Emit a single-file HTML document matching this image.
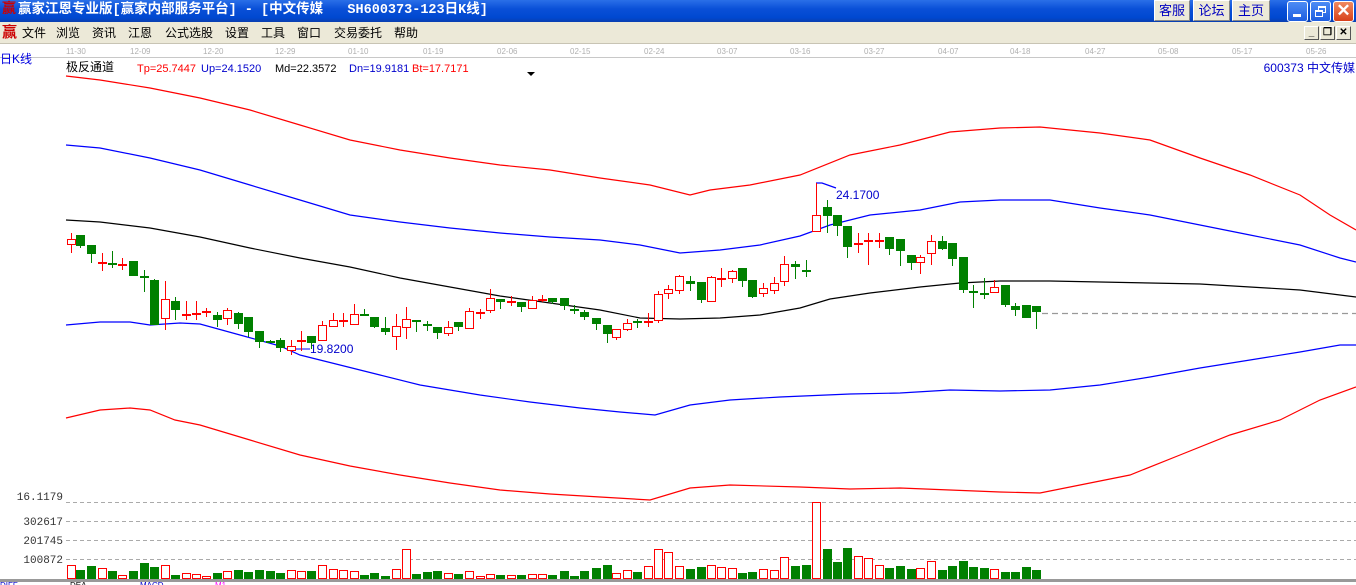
<!DOCTYPE html>
<html><head><meta charset="utf-8"><style>
*{margin:0;padding:0;box-sizing:border-box}
body{width:1356px;height:585px;overflow:hidden;background:#fff;font-family:"Liberation Sans","Noto Sans CJK SC",sans-serif;position:relative}
#title{position:absolute;left:0;top:0;width:1356px;height:22px;background:linear-gradient(#2a6fe8,#0a50d8 40%,#0048d0 80%,#0a3fb0);color:#fff;font-weight:bold;font-size:13.5px;line-height:21px;padding-left:18px;font-family:"Liberation Mono","Noto Sans CJK SC",monospace;}
.ico{position:absolute;color:#c00;font-size:14px;font-weight:bold}
.tb{position:absolute;top:0;height:21px;background:#ece9d8;border:1px solid #fff;border-right-color:#888;border-bottom-color:#888;color:#0000c0;font-size:13px;line-height:19px;text-align:center}
.wb{position:absolute;top:1px;width:21px;height:21px;border:1px solid #fff;border-radius:3px;background:linear-gradient(#4d8cf5,#1e5ee0)}
#menu{position:absolute;left:0;top:22px;width:1356px;height:22px;background:#ece9d8;font-size:12px;line-height:22px;border-bottom:1px solid #c8c4b4}
#menu span{position:absolute;top:0}
.mb{position:absolute;top:26px;width:15px;height:14px;border:1px solid #fff;border-right-color:#555;border-bottom-color:#555;background:#ece9d8;font-size:10px;line-height:12px;text-align:center;font-weight:bold}
</style></head><body>
<div id="title"><span class="ico" style="left:2px;top:0">赢</span>赢家江恩专业版[赢家内部服务平台] - [中文传媒&nbsp;&nbsp;&nbsp;SH600373-123日K线]</div>
<div class="tb" style="left:1154px;width:36px">客服</div>
<div class="tb" style="left:1193px;width:37px">论坛</div>
<div class="tb" style="left:1232px;width:38px">主页</div>
<div class="wb" style="left:1287px"><div style="position:absolute;left:5px;top:12px;width:8px;height:3px;background:#fff"></div></div>
<div class="wb" style="left:1310px"><div style="position:absolute;left:7px;top:4px;width:8px;height:7px;border:2px solid #fff;border-width:2px 1px 1px 1px"></div><div style="position:absolute;left:4px;top:8px;width:8px;height:7px;border:2px solid #fff;border-width:2px 1px 1px 1px;background:#2a6ae8"></div></div>
<div class="wb" style="left:1333px;background:linear-gradient(#f08a60,#d8401a);color:#fff;font-size:17px;line-height:18px;text-align:center;font-weight:bold">✕</div>
<div id="menu"><span style="left:2px;color:#c00;font-size:15px;font-weight:bold">赢</span><span style="left:22px">文件</span><span style="left:56px">浏览</span><span style="left:92px">资讯</span><span style="left:128px">江恩</span><span style="left:165px">公式选股</span><span style="left:225px">设置</span><span style="left:261px">工具</span><span style="left:297px">窗口</span><span style="left:334px">交易委托</span><span style="left:394px">帮助</span></div>
<div class="mb" style="left:1304px">_</div><div class="mb" style="left:1320px">❐</div><div class="mb" style="left:1336px">✕</div>
<svg width="1356" height="585" style="position:absolute;left:0;top:0" font-family="Liberation Sans, Noto Sans CJK SC, sans-serif">
<line x1="0" y1="57.5" x2="1356" y2="57.5" stroke="#c8c8c8"/>
<g fill="#b0b0b0" font-size="8"><text x="66" y="54">11-30</text><text x="130" y="54">12-09</text><text x="203" y="54">12-20</text><text x="275" y="54">12-29</text><text x="348" y="54">01-10</text><text x="423" y="54">01-19</text><text x="497" y="54">02-06</text><text x="570" y="54">02-15</text><text x="644" y="54">02-24</text><text x="717" y="54">03-07</text><text x="790" y="54">03-16</text><text x="864" y="54">03-27</text><text x="938" y="54">04-07</text><text x="1010" y="54">04-18</text><text x="1085" y="54">04-27</text><text x="1158" y="54">05-08</text><text x="1232" y="54">05-17</text><text x="1306" y="54">05-26</text></g>
<text x="0" y="63" fill="#0000e0" font-size="12">日K线</text>
<text x="66" y="71" fill="#000" font-size="12">极反通道</text>
<g font-size="11"><text x="137" y="72" fill="#f00">Tp=25.7447</text><text x="201" y="72" fill="#00c">Up=24.1520</text><text x="275" y="72" fill="#000">Md=22.3572</text><text x="349" y="72" fill="#00c">Dn=19.9181</text><text x="412" y="72" fill="#f00">Bt=17.7171</text></g>
<polygon points="527,72 535,72 531,76" fill="#000"/>
<text x="1355" y="72" fill="#00c" font-size="12" text-anchor="end">600373  中文传媒</text>
<g fill="none" stroke-width="1.2">
<polyline stroke="#f00" points="66,76 100,80 150,88 200,98 250,110 300,125 350,140 400,150 450,158 500,165 550,170 600,178 650,185 690,195 710,190 750,185 800,175 850,155 900,145 950,132 1000,128 1040,127 1100,133 1150,140 1200,158 1250,175 1300,195 1330,215 1356,230"/>
<polyline stroke="#00f" points="66,145 100,148 150,158 200,170 250,185 300,200 350,215 400,222 450,228 500,233 550,237 600,240 640,245 680,253 720,250 760,245 800,236 830,225 870,215 920,210 960,202 1000,200 1050,200 1100,208 1150,215 1200,225 1250,235 1300,245 1340,258 1356,262"/>
<polyline stroke="#000" points="66,220 100,222 150,228 200,237 250,248 300,258 350,267 400,278 450,287 500,296 550,303 600,310 640,318 680,319 720,318 760,315 800,308 830,299 870,293 920,287 960,283 1000,281 1050,281 1100,282 1150,283 1200,284 1250,287 1300,290 1356,297"/>
<polyline stroke="#00f" points="66,325 100,322 130,322 150,325 180,323 200,324 240,335 280,346 300,355 340,365 380,375 420,385 480,395 530,402 580,408 620,412 655,415 690,405 730,400 780,397 850,394 900,393 950,390 1000,391 1050,390 1100,385 1150,377 1200,368 1250,360 1300,352 1340,345 1356,345"/>
<polyline stroke="#f00" points="66,418 100,410 130,408 150,410 175,420 200,425 250,440 300,455 350,466 400,475 450,483 500,490 550,494 600,497 650,500 690,488 730,485 800,487 850,489 900,488 950,490 1000,492 1040,493 1080,485 1130,475 1180,455 1230,435 1280,420 1320,400 1356,387"/>
<line x1="1042" y1="313.5" x2="1356" y2="313.5" stroke="#999" stroke-dasharray="6,4"/>
<polyline stroke="#00f" points="816,183 822,183 836,188"/>
</g>
<text x="836" y="199" fill="#00c" font-size="12">24.1700</text>
<text x="310" y="353" fill="#00c" font-size="12">19.8200</text>
<line x1="294" y1="349" x2="310" y2="349" stroke="#00f"/>
<g stroke="#aaa" stroke-dasharray="4,3"><line x1="66" y1="502.5" x2="1356" y2="502.5"/><line x1="66" y1="521.5" x2="1356" y2="521.5"/><line x1="66" y1="540.5" x2="1356" y2="540.5"/><line x1="66" y1="559.5" x2="1356" y2="559.5"/></g>
<g fill="#333" font-size="11" text-anchor="end" font-family="Liberation Mono, monospace"><text x="63" y="500">16.1179</text><text x="63" y="525">302617</text><text x="63" y="544">201745</text><text x="63" y="563">100872</text></g>
<rect x="0" y="579" width="1356" height="3" fill="#999"/>
<g id="c"></g>
<g font-size="8"><text x="0" y="588" fill="#00c">DIFF</text><text x="70" y="588" fill="#000">DEA</text><text x="140" y="588" fill="#00c">MACD</text><text x="215" y="588" fill="#f0f">M1</text></g>
</svg>
<script>
var d=[[71,'r',239,244,233,253,565],[80,'g',235,246,235,248,570],[91,'g',245,254,245,263,566],[102,'r',262,262,253,271,568],[112,'g',263,263,251,268,571],[122,'r',264,264,258,270,575],[133,'g',261,276,261,276,571],[144,'g',276,276,270,292,563],[154,'g',280,325,279,325,567],[165,'r',299,318,281,330,565],[175,'g',301,310,297,320,575],[186,'r',314,314,301,320,573],[196,'r',313,313,301,320,574],[206,'r',311,311,308,317,576],[217,'g',315,320,312,327,573],[227,'r',310,318,308,325,571],[238,'g',313,324,312,329,570],[248,'g',317,332,317,337,572],[259,'g',331,342,331,348,570],[270,'g',341,341,340,343,571],[280,'g',340,348,338,352,573],[291,'r',346,350,340,355,570],[301,'r',340,340,331,351,571],[311,'g',336,343,336,349,571],[322,'r',325,340,321,340,565],[333,'r',320,326,313,327,569],[343,'r',320,320,313,327,570],[354,'r',314,324,304,325,571],[364,'g',314,314,309,316,575],[374,'g',317,327,317,328,573],[385,'g',328,332,317,335,576],[396,'r',326,336,314,350,569],[406,'r',319,327,307,339,549],[416,'g',320,320,320,332,574],[427,'g',324,324,321,331,572],[437,'g',327,333,327,339,571],[448,'r',327,333,321,336,573],[458,'g',322,327,322,331,574],[469,'r',311,328,308,328,571],[480,'r',312,312,309,319,576],[490,'r',298,310,289,313,574],[500,'g',299,302,299,309,575],[511,'r',301,301,296,306,575],[521,'g',302,307,302,312,575],[532,'r',300,308,296,309,574],[542,'r',299,299,295,302,574],[552,'g',298,302,298,304,575],[564,'g',298,306,298,310,571],[574,'g',309,309,305,314,576],[584,'g',312,317,310,320,571],[596,'g',318,324,318,330,568],[607,'g',325,334,325,343,565],[616,'r',329,337,329,340,573],[627,'r',323,329,319,331,570],[637,'g',321,321,319,328,572],[648,'r',321,321,313,327,566],[658,'r',294,320,291,323,549],[668,'r',289,293,285,299,552],[679,'r',276,290,275,294,566],[690,'g',281,284,276,291,569],[701,'g',282,300,282,303,567],[711,'r',277,301,276,302,565],[721,'r',278,278,268,287,567],[732,'r',271,278,270,283,568],[742,'g',268,281,268,287,573],[752,'g',280,297,280,298,572],[763,'r',288,293,283,297,569],[774,'r',283,290,277,294,570],[784,'r',264,281,256,286,557],[795,'g',264,267,261,279,566],[806,'g',270,270,260,277,565],[816,'r',215,231,183,232,502],[827,'g',207,216,200,233,549],[837,'g',215,226,215,236,562],[847,'g',226,247,226,258,548],[858,'r',243,243,233,253,556],[868,'r',240,240,233,265,558],[879,'r',240,240,233,248,565],[889,'g',237,249,237,255,568],[900,'g',239,251,239,266,566],[911,'g',255,263,255,270,569],[920,'r',257,262,255,274,568],[931,'r',241,253,235,265,561],[942,'g',241,249,236,250,570],[952,'g',243,259,243,266,566],[963,'g',257,290,257,293,561],[973,'g',291,291,285,308,567],[984,'g',293,293,278,299,568],[994,'r',287,292,280,293,569],[1005,'g',285,305,285,307,572],[1015,'g',306,310,303,316,572],[1026,'g',305,318,305,318,567],[1036,'g',306,312,306,329,570]];
var s='';
d.forEach(function(c){var x=c[0],col=c[1]=='r'?'#f00':'#008000',t=c[2],b=c[3],h=c[4],l=c[5],v=c[6];
s+='<line x1="'+(x+.5)+'" y1="'+h+'" x2="'+(x+.5)+'" y2="'+l+'" stroke="'+col+'"/>';
var bh=Math.max(b-t,1);
if(c[1]=='r'){if(b-t<2)s+='<rect x="'+(x-4)+'" y="'+t+'" width="9" height="2" fill="'+col+'"/>';else s+='<rect x="'+(x-3.5)+'" y="'+(t+.5)+'" width="8" height="'+bh+'" fill="#fff" stroke="'+col+'"/>';
s+='<rect x="'+(x-3.5)+'" y="'+(v+.5)+'" width="8" height="'+(578-v)+'" fill="#fff" stroke="'+col+'"/>';}
else{s+='<rect x="'+(x-4)+'" y="'+t+'" width="9" height="'+Math.max(b-t,2)+'" fill="'+col+'"/>';
s+='<rect x="'+(x-4)+'" y="'+v+'" width="9" height="'+(579-v)+'" fill="'+col+'"/>';}
});
document.getElementById('c').innerHTML=s;
</script>
</body></html>
